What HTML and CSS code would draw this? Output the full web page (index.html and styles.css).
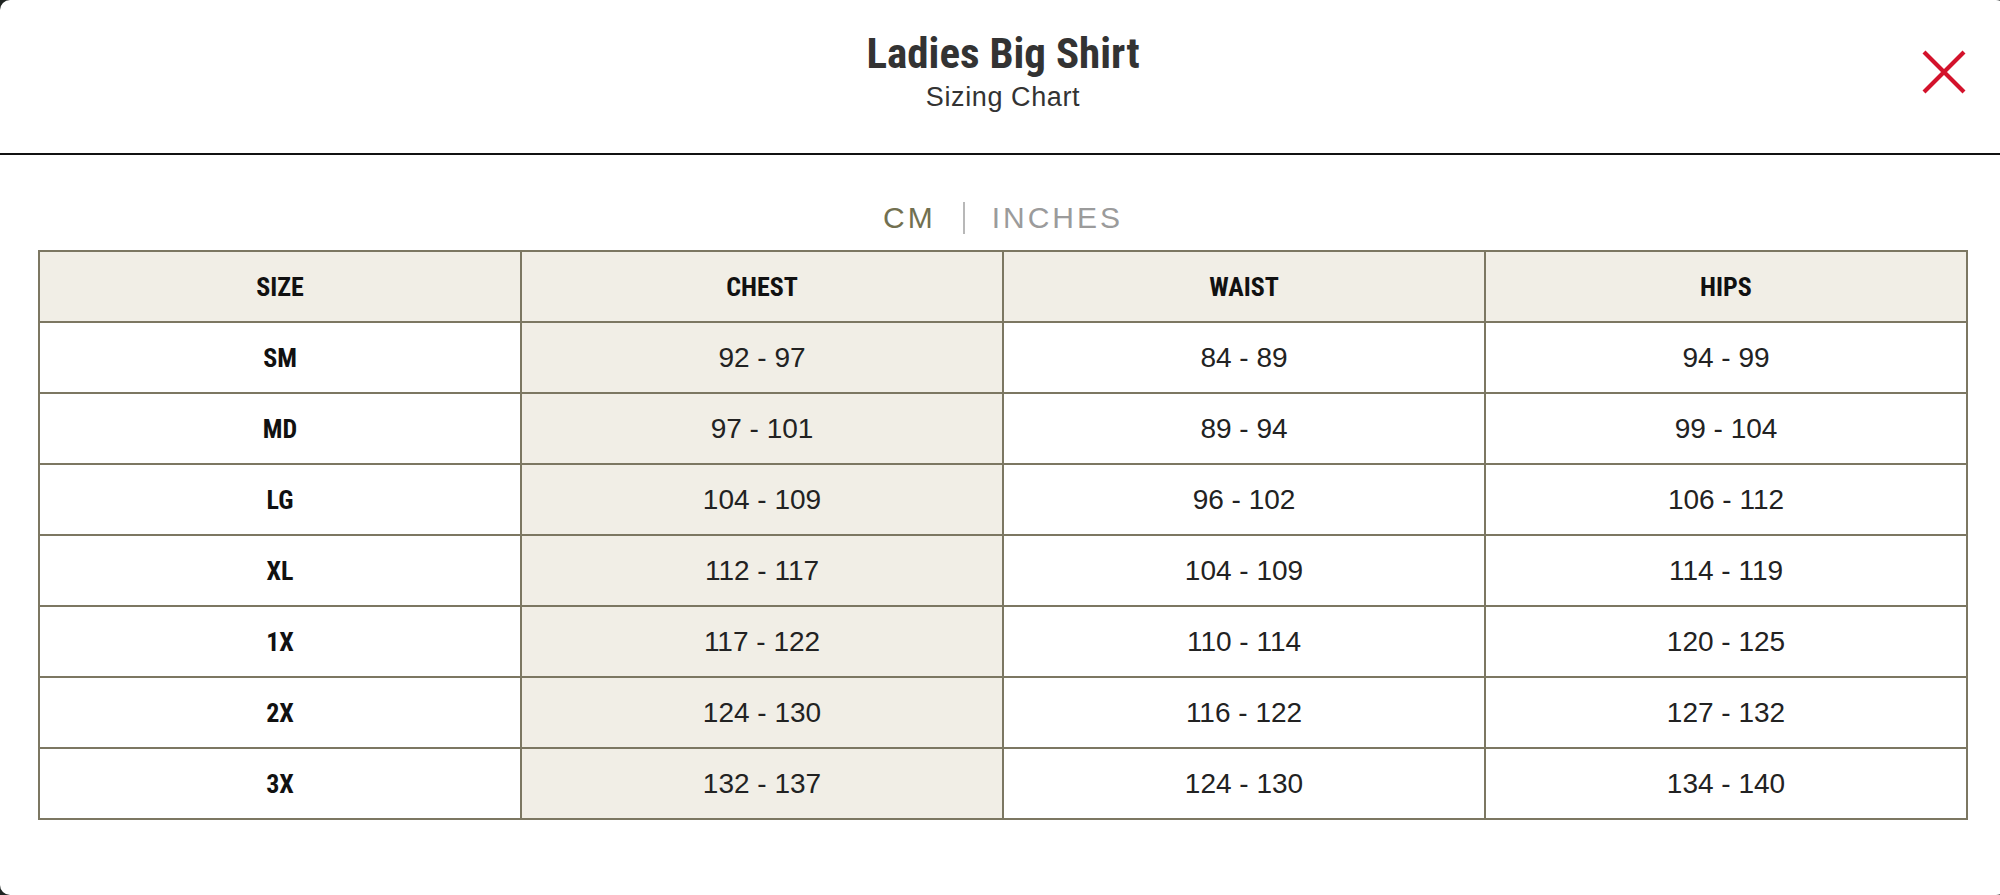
FILE: index.html
```html
<!DOCTYPE html>
<html lang="en">
<head>
<meta charset="utf-8">
<title>Ladies Big Shirt – Sizing Chart</title>
<link rel="stylesheet" href="styles.css">
</head>
<body>
<div class="modal">
  <header class="modal-header">
    <h1 class="title">Ladies Big Shirt</h1>
    <p class="subtitle">Sizing Chart</p>
    <button class="close" aria-label="Close">
      <svg viewBox="0 0 44 44" width="44" height="44" aria-hidden="true">
        <path d="M2 2 L42 42 M42 2 L2 42" stroke="#d3122b" stroke-width="4.2" fill="none"/>
      </svg>
    </button>
  </header>
  <div class="units">
    <span class="unit active">CM</span>
    <span class="sep"></span>
    <span class="unit">INCHES</span>
  </div>
  <table class="chart">
    <thead>
      <tr><th>SIZE</th><th>CHEST</th><th>WAIST</th><th>HIPS</th></tr>
    </thead>
    <tbody>
      <tr><th>SM</th><td class="hl">92 - 97</td><td>84 - 89</td><td>94 - 99</td></tr>
      <tr><th>MD</th><td class="hl">97 - 101</td><td>89 - 94</td><td>99 - 104</td></tr>
      <tr><th>LG</th><td class="hl">104 - 109</td><td>96 - 102</td><td>106 - 112</td></tr>
      <tr><th>XL</th><td class="hl">112 - 117</td><td>104 - 109</td><td>114 - 119</td></tr>
      <tr><th>1X</th><td class="hl">117 - 122</td><td>110 - 114</td><td>120 - 125</td></tr>
      <tr><th>2X</th><td class="hl">124 - 130</td><td>116 - 122</td><td>127 - 132</td></tr>
      <tr><th>3X</th><td class="hl">132 - 137</td><td>124 - 130</td><td>134 - 140</td></tr>
    </tbody>
  </table>
</div>
</body>
</html>
```
FILE: styles.css
```css
html, body {
  margin: 0;
  padding: 0;
}
body {
  background: #1f2422;
  overflow: hidden;
  width: 2000px;
  height: 895px;
}
.modal {
  position: relative;
  width: 2006px;
  height: 895px;
  background: #fff;
  border-radius: 10px;
  box-sizing: border-box;
  overflow: hidden;
}
.modal-header {
  border-bottom: 2px solid #111;
  text-align: center;
  padding-top: 29px;
  box-sizing: content-box;
  height: 124px;
}
.title {
  margin: 0;
  font-family: "Roboto Condensed", "DejaVu Sans Condensed", "Liberation Sans", sans-serif;
  font-stretch: condensed;
  font-weight: bold;
  font-size: 43px;
  line-height: 48px;
  color: #333;
}
.subtitle {
  margin: 4px 0 0;
  font-family: "Liberation Sans", Arial, sans-serif;
  font-size: 27px;
  line-height: 32px;
  letter-spacing: 0.6px;
  color: #333;
}
.close {
  position: absolute;
  top: 50px;
  right: 40px;
  width: 44px;
  height: 44px;
  padding: 0;
  border: 0;
  background: none;
  cursor: pointer;
}
.close svg {
  display: block;
}
.units {
  margin-top: 45px;
  display: flex;
  justify-content: center;
  align-items: center;
  gap: 27px;
  height: 36px;
  font-family: "Liberation Sans", Arial, sans-serif;
  font-size: 30px;
  line-height: 36px;
  letter-spacing: 3px;
}
.unit {
  color: #9b9b9b;
}
.unit.active {
  color: #727050;
}
.sep {
  display: block;
  width: 2px;
  height: 32px;
  background: #b8b8b8;
}
.chart {
  margin: 14px 38px 0;
  width: 1930px;
  table-layout: fixed;
  border-collapse: collapse;
  border: 2px solid #7c7762;
}
.chart th,
.chart td {
  border: 2px solid #7c7762;
  height: 69px;
  padding: 0;
  text-align: center;
  vertical-align: middle;
}
.chart th {
  font-family: "Roboto Condensed", "DejaVu Sans Condensed", "Liberation Sans", sans-serif;
  font-stretch: condensed;
  font-weight: bold;
  font-size: 26px;
  color: #111;
}
.chart thead th {
  background: #f1eee6;
}
.chart td {
  font-family: "Liberation Sans", Arial, sans-serif;
  font-size: 28px;
  color: #222;
}
.chart td.hl {
  background: #f1eee6;
}
```
